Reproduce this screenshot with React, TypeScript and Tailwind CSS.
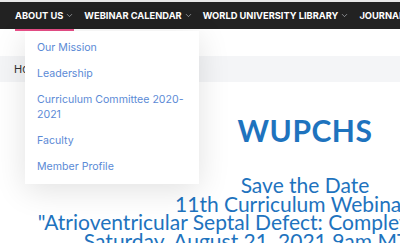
import { ChevronDown } from 'lucide-react';

const navItems = ['About Us', 'Webinar Calendar', 'World University Library', 'Journal'];

const aboutMenu = ['Our Mission', 'Leadership', 'Curriculum Committee 2020-2021', 'Faculty', 'Member Profile'];

export default function App() {
  return (
    <div className="relative w-[400px] h-[243px] overflow-hidden bg-white font-['Inter',sans-serif]">
      <div className="h-[2px] bg-[#e8e8e8]" />
      <nav className="h-[27px] bg-[#222222] flex items-center pl-[15px] gap-[10px] whitespace-nowrap">
        {navItems.map((label, idx) => (
          <div key={label} className="relative flex items-center h-full">
            <span className="text-[9.3px] font-bold uppercase text-white">{label}</span>
            {idx < 3 && <ChevronDown size={9} strokeWidth={1.5} className="ml-[2px] text-gray-300" />}
            {idx === 0 && <div className="absolute left-0 right-0 -bottom-[2px] h-[2px] bg-[#e94f88]" />}
          </div>
        ))}
      </nav>

      <div className="mt-[27px] h-[26px] bg-[#f4f5f7] flex items-center pl-[14px]">
        <span className="text-[11px] text-[#333]">Home</span>
      </div>

      <div className="w-[580px] ml-[15px] text-center text-[#1e73be] font-['Lato',sans-serif]">
        <h1 className="mt-[33px] text-[30px] font-bold leading-[30px] tracking-[0.5px]">WUPCHS</h1>
        <div className="mt-[31px] text-[21px] leading-[18.5px]">
          <p>Save the Date</p>
          <p className="pr-[26px]">11th Curriculum Webinar</p>
          <p>"Atrioventricular Septal Defect: Complete and Incomplete"</p>
          <p>Saturday, August 21, 2021 9am MT / 11am EDT</p>
        </div>
      </div>

      <ul className="absolute left-[25px] top-[31px] w-[174px] bg-white pt-[4px] pb-[4px] shadow-[0_6px_30px_rgba(0,0,0,0.12)]">
        {aboutMenu.map((item) => (
          <li key={item} className="px-[12px] py-[5px] mb-px text-[10.6px] leading-[15px] text-[#5b8ad6]">
            {item}
          </li>
        ))}
      </ul>
    </div>
  );
}
